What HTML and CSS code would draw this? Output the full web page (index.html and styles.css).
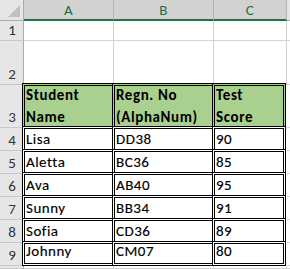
FILE: index.html
```html
<!DOCTYPE html>
<html>
<head>
<meta charset="utf-8">
<link rel="stylesheet" href="styles.css">
</head>
<body>
<div class="sheet">
  <div class="corner"><span class="tri"></span></div>
  <div class="colhead">A</div>
  <div class="colhead">B</div>
  <div class="colhead">C</div>
  <div class="colhead rest"></div>

  <div class="rowhead">1</div>
  <div class="cell"></div><div class="cell"></div><div class="cell"></div><div class="cell rest"></div>

  <div class="rowhead">2</div>
  <div class="cell"></div><div class="cell"></div><div class="cell"></div><div class="cell rest"></div>

  <div class="rowhead">3</div>
  <div class="data head first">Student<br>Name</div>
  <div class="data head">Regn. No<br>(AlphaNum)</div>
  <div class="data head last">Test<br>Score</div>
  <div class="cell rest"></div>

  <div class="rowhead">4</div>
  <div class="data first">Lisa</div><div class="data">DD38</div><div class="data last">90</div><div class="cell rest"></div>

  <div class="rowhead">5</div>
  <div class="data first">Aletta</div><div class="data">BC36</div><div class="data last">85</div><div class="cell rest"></div>

  <div class="rowhead">6</div>
  <div class="data first">Ava</div><div class="data">AB40</div><div class="data last">95</div><div class="cell rest"></div>

  <div class="rowhead">7</div>
  <div class="data first">Sunny</div><div class="data">BB34</div><div class="data last">91</div><div class="cell rest"></div>

  <div class="rowhead">8</div>
  <div class="data first">Sofia</div><div class="data">CD36</div><div class="data last">89</div><div class="cell rest"></div>

  <div class="rowhead">9</div>
  <div class="data first bottom">Johnny</div><div class="data bottom">CM07</div><div class="data last bottom">80</div><div class="cell rest"></div>

  <div class="rowhead"></div>
  <div class="cell"></div><div class="cell"></div><div class="cell"></div><div class="cell rest"></div>
</div>
</body>
</html>
```

FILE: styles.css
```css
html, body {
  margin: 0;
  padding: 0;
  background: #ffffff;
}

.sheet {
  width: 290px;
  height: 269px;
  overflow: hidden;
  display: grid;
  grid-template-columns: 24px 90px 100px 73px 1fr;
  grid-template-rows: 21px 20px 44px 43px repeat(6, 23px) 1fr;
  font-family: Carlito, Calibri, Lato, "Liberation Sans", sans-serif;
  font-size: 15px;
  color: #000;
}

.corner {
  background: #e6e6e6;
  border-right: 1px solid #ababab;
  border-bottom: 1px solid #ababab;
  position: relative;
}

.tri {
  position: absolute;
  right: 3px;
  bottom: 3px;
  width: 0;
  height: 0;
  border-left: 12px solid transparent;
  border-bottom: 12px solid #c0c0c0;
}

.colhead {
  background: #d2d2d2;
  border-right: 1px solid #b4b4b4;
  border-bottom: 2px solid #217346;
  color: #1f6e48;
  font-size: 15px;
  letter-spacing: 0.3px;
  display: flex;
  align-items: flex-end;
  justify-content: center;
  line-height: 18px;
  padding-bottom: 0;
}

.colhead.rest {
  background: #e6e6e6;
  border-right: none;
  border-bottom: 1px solid #ababab;
}

.rowhead {
  background: #e6e6e6;
  border-right: 1px solid #ababab;
  border-bottom: 1px solid #c8c8c8;
  color: #333;
  font-size: 15px;
  display: flex;
  align-items: flex-end;
  justify-content: center;
  line-height: 18px;
  padding-bottom: 1px;
  padding-left: 1px;
}

.cell {
  border-right: 1px solid #d4d4d4;
  border-bottom: 1px solid #d4d4d4;
}

.cell.rest {
  border-right: none;
}

.data {
  margin: -2px 0 0 -2px;
  border-left: 3px double #000;
  border-top: 3px double #000;
  background: #fff;
  display: flex;
  align-items: flex-end;
  padding: 0 2px 2px 1px;
  line-height: 20px;
  letter-spacing: 0.5px;
  white-space: nowrap;
  -webkit-text-stroke: 0.15px #000;
}

.data.last {
  margin-right: 1px;
  border-right: 3px double #000;
}

.data.bottom {
  border-bottom: 3px double #000;
}

.data.head {
  background: #a9d08e;
  font-weight: bold;
  letter-spacing: 0.6px;
  line-height: 22px;
  padding-bottom: 0;
  -webkit-text-stroke: 0;
}
```
